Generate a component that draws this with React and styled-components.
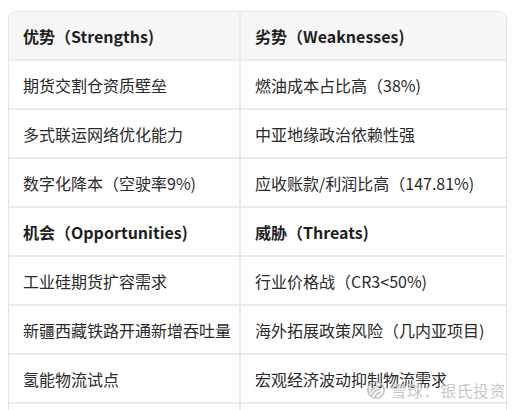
import React from 'react';
import styled, { createGlobalStyle } from 'styled-components';

const GlobalStyle = createGlobalStyle`
  html, body {
    margin: 0;
    padding: 0;
    background: #ffffff;
  }
  body {
    font-family: "Noto Sans CJK SC", "Noto Sans", sans-serif;
    color: #262626;
  }
`;

const Page = styled.div`
  position: relative;
  width: 520px;
  height: 410px;
  overflow: hidden;
  padding: 11px 0 0 8px;
  box-sizing: border-box;
`;

const TableFrame = styled.div`
  width: 499px;
  border: 1px solid #e3e3e3;
  border-radius: 8px;
  overflow: hidden;
  box-sizing: border-box;
`;

const Table = styled.table`
  width: 100%;
  border-collapse: separate;
  border-spacing: 0;
  table-layout: fixed;
`;

const Cell = styled.td`
  height: 47px;
  padding: 0 14px;
  box-sizing: content-box;
  font-size: 16px;
  line-height: 20px;
  white-space: nowrap;
  vertical-align: middle;
  border-bottom: 2px solid #ebebeb;
  font-weight: ${p => (p.$head ? 700 : 400)};
  background: ${p => (p.$shade ? '#f7f7f7' : '#ffffff')};
  color: ${p => (p.$head ? '#1e1e1e' : '#2a2a2a')};

  &:first-child {
    border-right: 2px solid #ebebeb;
  }
`;

const Watermark = styled.div`
  position: absolute;
  right: 14px;
  bottom: 8px;
  display: flex;
  align-items: center;
  gap: 4px;
  font-size: 16px;
  letter-spacing: 0.5px;
  color: rgba(190, 190, 190, 0.85);
  text-shadow: 0 0 1px rgba(255, 255, 255, 0.9);
  pointer-events: none;
`;

const rows = [
  { head: true, shade: true, cells: ['优势（Strengths)', '劣势（Weaknesses)'] },
  { cells: ['期货交割仓资质壁垒', '燃油成本占比高（38%)'] },
  { cells: ['多式联运网络优化能力', '中亚地缘政治依赖性强'] },
  { cells: ['数字化降本（空驶率9%)', '应收账款/利润比高（147.81%)'] },
  { head: true, cells: ['机会（Opportunities)', '威胁（Threats)'] },
  { cells: ['工业硅期货扩容需求', '行业价格战（CR3<50%)'] },
  { cells: ['新疆西藏铁路开通新增吞吐量', '海外拓展政策风险（几内亚项目)'] },
  { cells: ['氢能物流试点', '宏观经济波动抑制物流需求'] },
  { cells: ['', ''] },
];

const SnowLogo = () => (
  <svg width="20" height="20" viewBox="0 0 20 20" fill="none" stroke="rgba(185,185,185,0.9)" strokeWidth="1.6" strokeLinecap="round">
    <circle cx="10" cy="10" r="8.2" />
    <path d="M4.5 12.5c2-4 5-6 9-6.5" />
    <path d="M6 15c2-3.5 4.5-5.5 8-6" />
    <path d="M9 16.5c1.5-2.5 3-3.8 5.5-4.3" />
  </svg>
);

const App = () => (
  <>
    <GlobalStyle />
    <Page>
      <TableFrame>
        <Table>
          <colgroup>
            <col style={{ width: '232px' }} />
            <col />
          </colgroup>
          <tbody>
            {rows.map((r, i) => (
              <tr key={i}>
                {r.cells.map((c, j) => (
                  <Cell key={j} $head={r.head} $shade={r.shade}>
                    {c}
                  </Cell>
                ))}
              </tr>
            ))}
          </tbody>
        </Table>
      </TableFrame>
      <Watermark>
        <SnowLogo />
        <span>雪球：银氏投资</span>
      </Watermark>
    </Page>
  </>
);

export default App;
